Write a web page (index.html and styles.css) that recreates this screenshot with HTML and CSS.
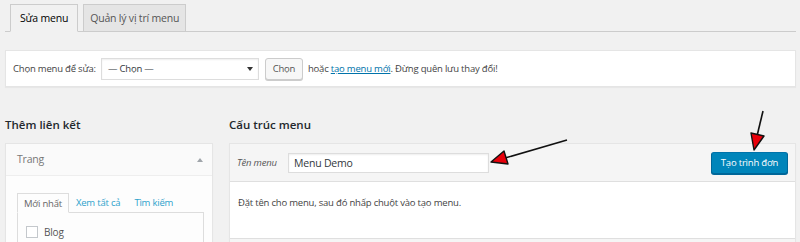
FILE: index.html
```html
<!DOCTYPE html>
<html lang="vi">
<head>
    <meta charset="UTF-8">
    <meta name="viewport" content="width=device-width, initial-scale=1.0">
    <title>Menu</title>
    <link rel="stylesheet" href="styles.css">
</head>
<body>

    <div class="wrap">
        <!-- Tabs -->
        <div class="nav-tabs">
            <a class="nav-tab active">Sửa menu</a>
            <a class="nav-tab">Quản lý vị trí menu</a>
        </div>

        <!-- Select menu -->
        <div class="manage-menus">
            <span class="label">Chọn menu để sửa:</span>
            <div class="select">— Chọn —<span class="caret"></span></div>
            <button class="btn">Chọn</button>
            <span class="hint">hoặc <a href="#">tạo menu mới</a>. Đừng quên lưu thay đổi!</span>
        </div>

        <div class="columns">
            <!-- Left column -->
            <div class="col-left">
                <h2>Thêm liên kết</h2>
                <div class="panel">
                    <div class="accordion-title">Trang<span class="up"></span></div>
                    <div class="accordion-body">
                        <div class="sub-tabs">
                            <span class="sub-tab active">Mới nhất</span>
                            <a class="sub-tab">Xem tất cả</a>
                            <a class="sub-tab">Tìm kiếm</a>
                        </div>
                        <div class="sub-box">
                            <label class="check"><span class="box"></span>Blog</label>
                        </div>
                    </div>
                </div>
            </div>

            <!-- Right column -->
            <div class="col-right">
                <h2>Cấu trúc menu</h2>
                <div class="panel">
                    <div class="menu-header">
                        <span class="name-label">Tên menu</span>
                        <div class="name-input">Menu Demo</div>
                        <button class="btn-primary">Tạo trình đơn</button>
                    </div>
                    <div class="menu-body">Đặt tên cho menu, sau đó nhấp chuột vào tạo menu.</div>
                    <div class="menu-footer"></div>
                </div>
            </div>
        </div>
    </div>

    <!-- Annotation arrows -->
    <svg class="arrows" width="800" height="242" viewBox="0 0 800 242">
        <line x1="567" y1="140" x2="505" y2="158" stroke="#111" stroke-width="1.6"/>
        <polygon points="491,162 504,151 508,164" fill="#e8000b" stroke="#111" stroke-width="1.4" stroke-linejoin="round"/>
        <line x1="763" y1="111" x2="757" y2="136" stroke="#111" stroke-width="1.6"/>
        <polygon points="754,150 751,133 764,136" fill="#e8000b" stroke="#111" stroke-width="1.4" stroke-linejoin="round"/>
    </svg>

</body>
</html>
```

FILE: styles.css
```css
/* Page */
body {
    margin: 0;
    background: #f1f1f1;
    font-family: "Open Sans", "Noto Sans", sans-serif;
    font-size: 9.5px;
    letter-spacing: -0.2px;
    color: #444;
    height: 242px;
    overflow: hidden;
    position: relative;
}

.wrap {
    padding: 4px 4px 0 5px;
}

/* Tabs */
.nav-tabs {
    display: flex;
    gap: 5px;
    padding-left: 5px;
    border-bottom: 1px solid #ccc;
}

.nav-tab {
    height: 26px;
    line-height: 26px;
    padding: 0 6px;
    border: 1px solid #ccc;
    border-bottom: none;
    background: #e5e5e5;
    color: #555;
    font-size: 10.5px;
    margin-bottom: -1px;
}

.nav-tab.active {
    background: #f1f1f1;
    color: #000;
    border-bottom: 1px solid #f1f1f1;
    padding: 0 9px;
}

/* Select menu bar */
.manage-menus {
    margin-top: 18px;
    height: 35px;
    display: flex;
    align-items: center;
    padding: 0 7px;
    background: #fff;
    border: 1px solid #e5e5e5;
    box-shadow: 0 1px 1px rgba(0, 0, 0, 0.04);
}

.label {
    margin-right: 5px;
}

.select {
    position: relative;
    width: 150px;
    height: 20px;
    line-height: 20px;
    padding-left: 6px;
    border: 1px solid #ddd;
    box-shadow: inset 0 1px 2px rgba(0, 0, 0, 0.07);
    color: #32373c;
}

.caret {
    position: absolute;
    right: 5px;
    top: 8px;
    border-left: 3px solid transparent;
    border-right: 3px solid transparent;
    border-top: 4px solid #333;
}

.btn {
    margin-left: 6px;
    height: 22px;
    width: 38px;
    padding: 0;
    font: inherit;
    letter-spacing: inherit;
    color: #555;
    background: #f7f7f7;
    border: 1px solid #ccc;
    border-radius: 3px;
    box-shadow: 0 1px 0 #ccc;
}

.hint {
    margin-left: 5px;
}

.hint a {
    color: #0073aa;
}

/* Columns */
.columns {
    display: flex;
    gap: 16px;
    margin-top: 30px;
}

h2 {
    margin: 0 0 10px;
    font-size: 11.5px;
    line-height: 16px;
    font-weight: 600;
    letter-spacing: 0;
    color: #23282d;
}

.col-left {
    width: 208px;
    flex-shrink: 0;
}

.col-right {
    flex: 1;
}

.panel {
    background: #fff;
    border: 1px solid #e5e5e5;
    box-shadow: 0 1px 1px rgba(0, 0, 0, 0.04);
}

/* Left accordion */
.accordion-title {
    height: 31px;
    line-height: 31px;
    padding: 0 11px;
    background: #fafafa;
    border-bottom: 1px solid #eee;
    color: #777;
    font-size: 10.5px;
    position: relative;
}

.up {
    position: absolute;
    right: 9px;
    top: 14px;
    border-left: 3px solid transparent;
    border-right: 3px solid transparent;
    border-bottom: 4px solid #a0a5aa;
}

.accordion-body {
    padding: 17px 8px 0 11px;
    background: #fdfdfd;
    height: 80px;
}

.sub-tabs {
    display: flex;
    height: 19px;
    line-height: 19px;
}

.sub-tab {
    padding: 0 7px;
    color: #2ea2cc;
}

.sub-tab.active {
    color: #666;
    padding: 0 6px;
    border: 1px solid #ddd;
    border-bottom: 1px solid #fdfdfd;
    background: #fdfdfd;
    margin-bottom: -1px;
}

.sub-box {
    border: 1px solid #ddd;
    padding: 12px 8px;
    height: 40px;
}

.check {
    display: flex;
    align-items: center;
    gap: 6px;
    color: #555;
    font-size: 10px;
}

.box {
    width: 10px;
    height: 10px;
    border: 1px solid #c4c8cc;
    background: #fff;
}

/* Right menu structure */
.menu-header {
    display: flex;
    align-items: center;
    height: 37px;
    padding: 0 7px;
    background: #f5f5f5;
    border-bottom: 1px solid #dfdfdf;
}

.name-label {
    font-style: italic;
    color: #555;
    width: 51px;
}

.name-input {
    width: 194px;
    height: 18px;
    line-height: 18px;
    padding-left: 5px;
    background: #fff;
    border: 1px solid #ddd;
    box-shadow: inset 0 1px 2px rgba(0, 0, 0, 0.07);
    color: #32373c;
    font-size: 10.5px;
}

.btn-primary {
    margin-left: auto;
    width: 77px;
    height: 22px;
    padding: 0;
    white-space: nowrap;
    font: inherit;
    letter-spacing: inherit;
    color: #fff;
    background: #0085ba;
    border: 1px solid #0073aa;
    border-color: #0073aa #006799 #006799;
    border-radius: 3px;
    box-shadow: 0 1px 0 #006799;
}

.menu-body {
    height: 42px;
    padding: 14px 8px 0;
    color: #444;
}

.menu-footer {
    height: 20px;
    background: #f5f5f5;
    border-top: 1px solid #dfdfdf;
}

/* Annotation arrows */
.arrows {
    position: absolute;
    top: 0;
    left: 0;
    pointer-events: none;
}
```
